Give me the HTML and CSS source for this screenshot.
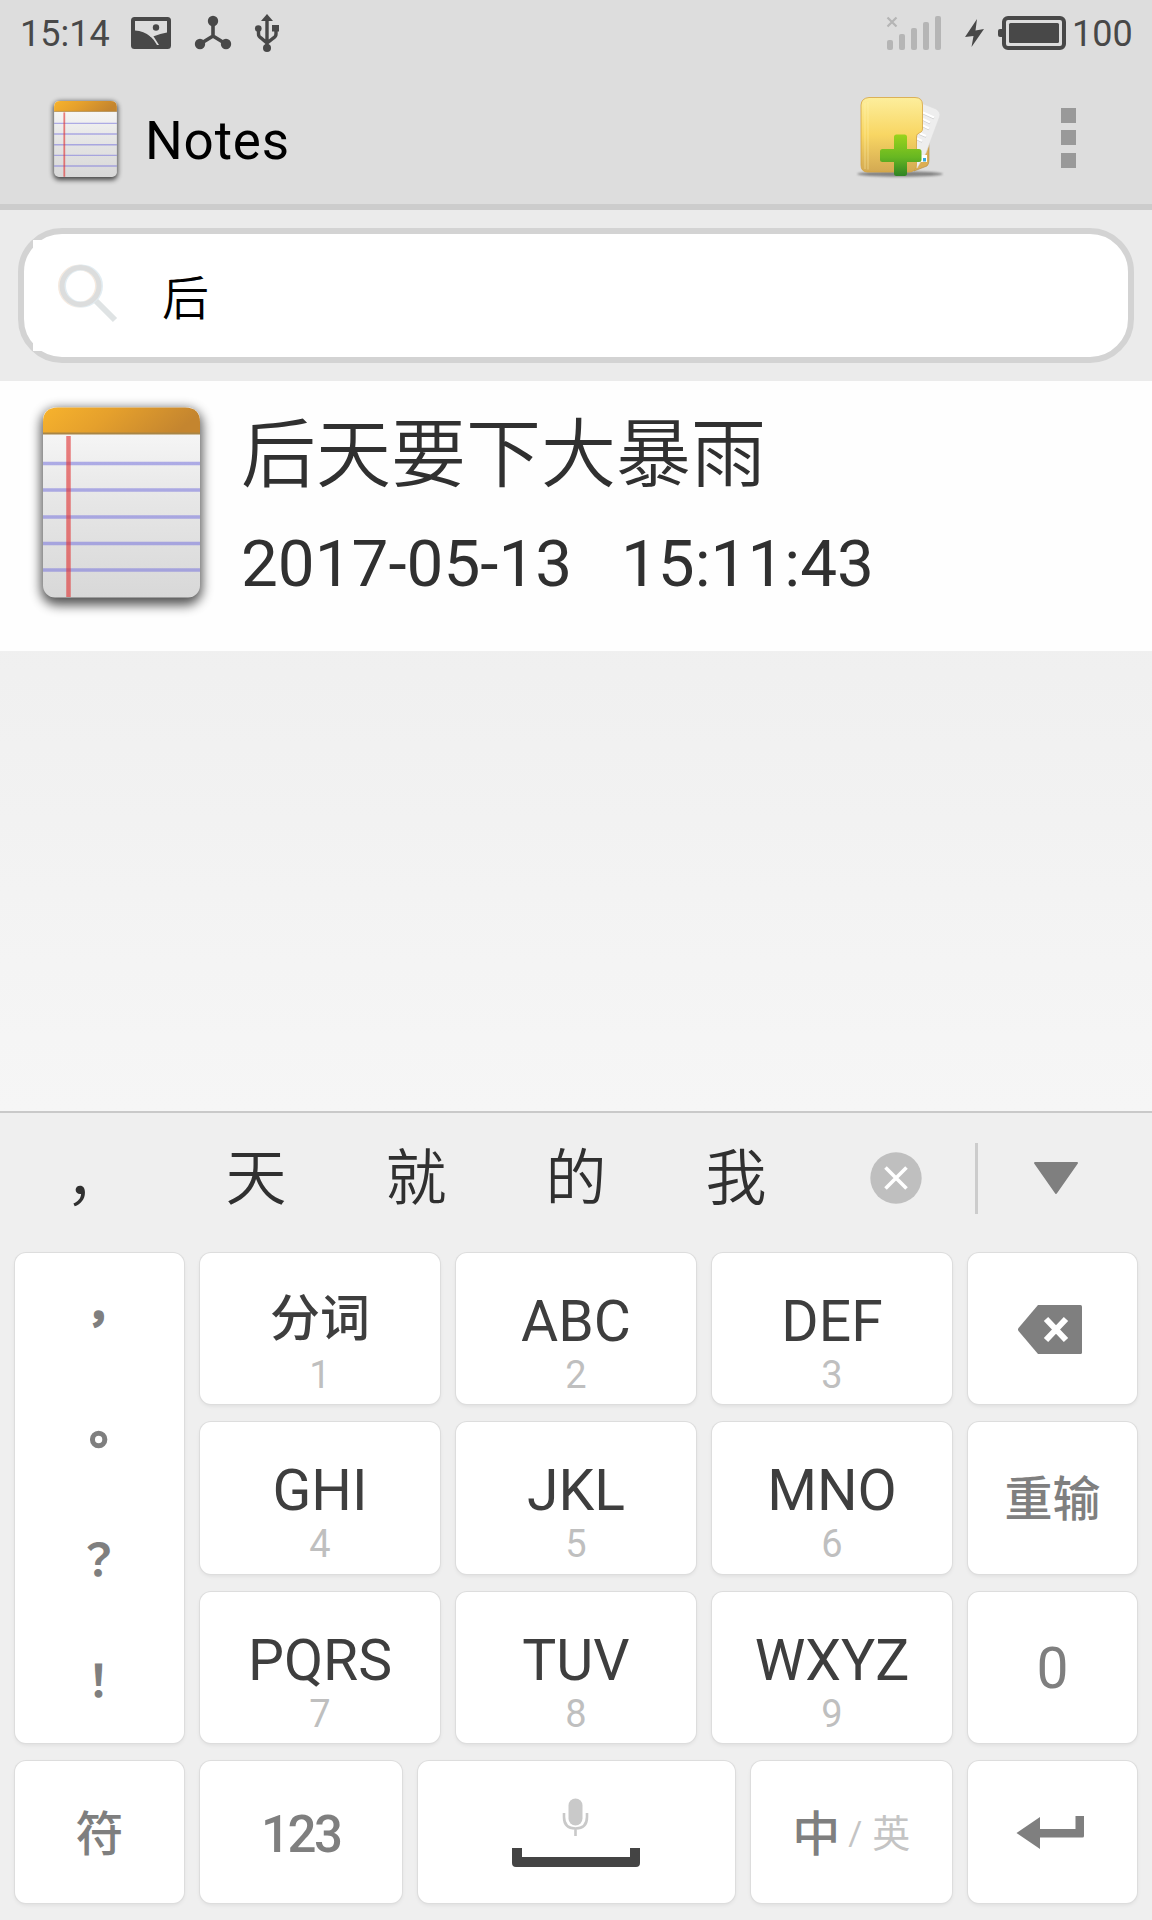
FILE: index.html
```html
<!DOCTYPE html>
<html lang="zh-CN">
<head>
<meta charset="utf-8">
<title>Notes</title>
<link rel="stylesheet" href="styles.css">
</head>
<body>
<svg class="defs" width="0" height="0" aria-hidden="true">
  <defs>
    <linearGradient id="binding" x1="0" x2="1" y1="0" y2="0.2"><stop offset="0" stop-color="#f7b32d"/><stop offset="0.45" stop-color="#e5a02c"/><stop offset="1" stop-color="#c4852f"/></linearGradient>
    <linearGradient id="paper" x1="0" x2="0" y1="0" y2="1"><stop offset="0" stop-color="#fbfbfb"/><stop offset="0.5" stop-color="#e6e6e6"/><stop offset="1" stop-color="#d8d8d8"/></linearGradient>
    <filter id="padShadow" x="-20%" y="-20%" width="140%" height="140%"><feGaussianBlur stdDeviation="6"/></filter>
    <symbol id="notepad" viewBox="0 0 197 230">
      <rect x="18" y="19" width="161" height="196" rx="16" fill="#000" opacity="0.68" filter="url(#padShadow)"/>
      <rect x="20" y="17.500" width="157" height="190" rx="12" fill="url(#paper)"/>
      <path d="M20 44V32Q20 17.500 35 17.500H162Q177 17.500 177 32V44Z" fill="url(#binding)"/>
      <path d="M20 43.500H177" stroke="#a98545" stroke-width="1.800"/>
      <path d="M20 73.500H177M20 100H177M20 127H177M20 153.500H177M20 180H177" stroke="#7772dc" stroke-opacity="0.55" stroke-width="3.500"/>
      <path d="M45.500 46V207" stroke="#e03232" stroke-opacity="0.62" stroke-width="4.500"/>
    </symbol>
  </defs>
</svg>
<div class="screen">
  <header class="status-bar">
    <span class="clock">15:14</span>
    <svg class="st-picture" viewBox="131 17 40 32" width="40" height="32"><rect x="131" y="17" width="40" height="32" rx="3.500" fill="#484848"/><path d="M135 21H167V32.500Q160 33.500 154.500 36L151 37Q143.500 30.500 135 30.500Z" fill="#ddd"/><circle cx="156" cy="27.500" r="3.200" fill="#484848"/><path d="M149.500 35.500Q154.500 40 157 45H159L153 35.500Z" fill="#ddd"/></svg>
    <svg class="st-hub" viewBox="194 15 38 35" width="38" height="35" fill="#484848"><path d="M213 21V36L200 44M213 36L226 44" fill="none" stroke="#484848" stroke-width="3.600"/><circle cx="213" cy="21" r="5.200"/><circle cx="200" cy="44" r="5.200"/><circle cx="226" cy="44" r="5.200"/></svg>
    <svg class="st-usb" viewBox="254 14 26 39" width="26" height="39" fill="#484848"><path d="M267 14L273 21H261Z"/><path d="M267 20V48M258.500 29V34Q258.500 36.500 261 38L267 43L273.500 38Q276 36.500 276 34V29" fill="none" stroke="#484848" stroke-width="3.400"/><circle cx="258.300" cy="28.500" r="3.300"/><path d="M272 25H279V31.500H272Z"/><circle cx="267" cy="48" r="4"/></svg>
    <svg class="st-signal" viewBox="886 15 56 36" width="56" height="36" fill="#b5b5b5"><rect x="887" y="40" width="6" height="10" rx="2"/><rect x="899" y="34" width="6" height="16" rx="2"/><rect x="911" y="28" width="6" height="22" rx="2"/><rect x="923" y="22" width="6" height="28" rx="2"/><rect x="935" y="16" width="6" height="34" rx="2"/><path d="M887.500 17.500L896.500 26.500M896.500 17.500L887.500 26.500" stroke="#b5b5b5" stroke-width="2.200"/></svg>
    <svg class="st-bolt" viewBox="964 18 21 30" width="21" height="30" fill="#484848"><path d="M977 19L965 37L973.500 36L971.500 47L984 29L975.500 30.500Z"/></svg>
    <svg class="st-battery" viewBox="997 15 70 36" width="70" height="36" fill="#484848"><rect x="1004" y="18" width="60" height="30" rx="4" fill="none" stroke="#484848" stroke-width="4"/><rect x="1009" y="23" width="50" height="20" rx="1.500"/><rect x="998" y="29" width="6" height="8" rx="2"/></svg>
    <span class="level">100</span>
  </header>

  <div class="action-bar">
    <svg class="app-icon" width="79" height="92"><use href="#notepad"/></svg>
    <h1 class="app-title">Notes</h1>
    <svg class="new-note" viewBox="855 94 90 86" width="90" height="86">
      <defs>
        <linearGradient id="folder" x1="0" x2="0" y1="0" y2="1"><stop offset="0" stop-color="#fdee9c"/><stop offset="0.5" stop-color="#f8d663"/><stop offset="1" stop-color="#d3a952"/></linearGradient>
        <linearGradient id="plus" x1="0" x2="0" y1="0" y2="1"><stop offset="0" stop-color="#9ad31c"/><stop offset="0.55" stop-color="#67b722"/><stop offset="1" stop-color="#2f8424"/></linearGradient>
        <filter id="soft" x="-20%" y="-100%" width="140%" height="300%"><feGaussianBlur stdDeviation="1.300"/></filter>
      </defs>
      <ellipse cx="900" cy="174" rx="43" ry="2.800" fill="#555" opacity="0.65" filter="url(#soft)"/>
      <path d="M914 171L927 166Q929 164 929 160V143L925 139L914 150Z" fill="#dcae54" stroke="#b48a3d" stroke-width="0.600"/>
      <path d="M921 103L936 109Q941 112 939.500 117L926 153L917 168L914 160Z" fill="#eee" stroke="#dcdcdc" stroke-width="0.600"/>
      <path d="M923 113.500L934 118.500M923 120L930 123.500M922 126L929 129.500M919 134L926 137M917 139.500L922 142" stroke="#ccc" stroke-width="1.600"/>
      <path d="M923 112.500L934 117.500M923 119L930 122.500M922 125L929 128.500M919 133L926 136M917 138.500L922 141" stroke="#fff" stroke-width="2"/>
      <path d="M921.500 155H927V162H921Z" fill="#fff"/><path d="M923 158H926V161.500H923Z" fill="#36a8e0"/>
      <path d="M869 97.500H915Q922.500 97.500 922.500 105V129Q922.500 131 921 132L917.500 134Q916.500 135 916.500 137V165Q916 171 910 172H867Q861 171.500 861 165V105Q861.500 98 869 97.500Z" fill="url(#folder)" stroke="#d5a33e" stroke-width="0.800"/>
      <path d="M865 103V169M868 102V169.500" stroke="#fff3b0" stroke-width="0.800" opacity="0.6"/>
      <path d="M896.500 134.500H904.500Q907 134.500 907 137V149H919Q921.500 149 921.500 151.500V159.500Q921.500 162 919 162H907V173.500Q907 176 904.500 176H896.500Q894 176 894 173.500V162H882.500Q880 162 880 159.500V151.500Q880 149 882.500 149H894V137Q894 134.500 896.500 134.500Z" fill="url(#plus)"/>
    </svg>
    <svg class="overflow" viewBox="0 0 15 60" width="15" height="60" fill="#999"><path d="M0 0H15V15H0ZM0 22H15V37H0ZM0 45H15V60H0Z"/></svg>
  </div>

  <div class="search-area">
    <div class="search-box">
      <svg class="search-icon" viewBox="33 240 100 111" width="100" height="111" fill="none"><circle cx="79.500" cy="286" r="18.500" stroke="#f6eadf" stroke-width="6"/><circle cx="81.500" cy="286" r="18.500" stroke="#e2edf3" stroke-width="6"/><circle cx="80.500" cy="286" r="18.500" stroke="#dcdddd" stroke-width="5"/><path d="M96 301L115 320" stroke="#dfe3e4" stroke-width="6"/></svg>
      <span class="query">后</span>
    </div>
  </div>

  <main class="results">
    <article class="note">
      <svg class="note-icon" width="197" height="230"><use href="#notepad"/></svg>
      <div class="note-text">
        <h2 class="note-title">后天要下大暴雨</h2>
        <p class="note-date">2017-05-13   15:11:43</p>
      </div>
    </article>
  </main>

  <section class="keyboard">
    <div class="candidates">
      <span class="cand han">，</span><span class="cand han">天</span><span class="cand han">就</span><span class="cand han">的</span><span class="cand han">我</span>
      <span class="cand"><svg viewBox="0 0 52 52" width="52" height="52"><circle cx="26" cy="26" r="25.700" fill="#bfbfbf"/><path d="M15.500 15.500L36.500 36.500M36.500 15.500L15.500 36.500" stroke="#fff" stroke-width="3.600"/></svg></span>
      <span class="cand expand"><svg viewBox="0 0 46 34" width="46" height="34"><path d="M2 2H44L23 32Z" fill="#7f7f7f" stroke="#7f7f7f" stroke-width="2" stroke-linejoin="round"/></svg></span>
    </div>
    <div class="keys">
      <div class="key punct"><span class="comma">，</span><span class="stop">。</span><span>？</span><span>！</span></div>
      <div class="key letter"><b class="fenci">分词</b><i>1</i></div>
      <div class="key letter"><b>ABC</b><i>2</i></div>
      <div class="key letter"><b>DEF</b><i>3</i></div>
      <div class="key icon-key"><svg viewBox="1018 1305 64 49" width="64" height="49"><path d="M1038 1305H1080.500Q1082 1305 1082 1306.500V1352.500Q1082 1354 1080.500 1354H1038L1018.500 1331Q1017.500 1329.500 1018.500 1328Z" fill="#7f7f7f"/><path d="M1046 1319L1066 1340M1066 1319L1046 1340" stroke="#fff" stroke-width="6"/></svg></div>
      <div class="key letter"><b>GHI</b><i>4</i></div>
      <div class="key letter"><b>JKL</b><i>5</i></div>
      <div class="key letter"><b>MNO</b><i>6</i></div>
      <div class="key side retype">重输</div>
      <div class="key letter"><b>PQRS</b><i>7</i></div>
      <div class="key letter"><b>TUV</b><i>8</i></div>
      <div class="key letter"><b>WXYZ</b><i>9</i></div>
      <div class="key side zero">0</div>
    </div>
    <div class="keys-bottom">
      <div class="key side symbols">符</div>
      <div class="key side numbers">123</div>
      <div class="key"><svg class="space" viewBox="512 1796 128 69" width="128" height="69"><rect x="568.500" y="1796.500" width="14" height="27" rx="7" fill="#c9c9c9"/><path d="M564 1811V1815Q564 1826.500 575.500 1826.500Q587 1826.500 587 1815V1811M575.500 1827V1834" fill="none" stroke="#c9c9c9" stroke-width="2.600"/><path d="M512 1846H522V1855H630V1846H640V1861Q640 1865 636 1865H516Q512 1865 512 1861Z" fill="#444"/></svg></div>
      <div class="key side lang"><span>中</span><span class="slash">/</span><span class="alt">英</span></div>
      <div class="key icon-key"><svg viewBox="1016 1817 68 34" width="68" height="34" fill="#7f7f7f"><path d="M1016.500 1834L1040 1818V1830H1075.500V1817H1084V1837Q1084 1838.500 1082.500 1838.500H1040V1850Z"/></svg></div>
    </div>
  </section>
</div>
</body>
</html>
```

FILE: styles.css
```css
* { box-sizing: border-box; margin: 0; padding: 0; }

body {
  width: 1152px;
  height: 1920px;
  overflow: hidden;
  font-family: Roboto, "Noto Sans CJK SC", sans-serif;
  background: #fff;
}

svg { display: block; flex: none; }
.defs { position: absolute; }

.screen { display: flex; flex-direction: column; height: 1920px; }

/* status bar */
.status-bar {
  display: flex;
  align-items: flex-start;
  height: 66px;
  flex: none;
  background: #ddd;
  color: #484848;
  font-size: 36px;
  line-height: 40px;
}
.clock { margin: 14px 0 0 20px; width: 90px; }
.st-picture { margin: 17px 0 0 21px; }
.st-hub { margin: 15px 0 0 23px; }
.st-usb { margin: 14px 0 0 22px; }
.st-signal { margin: 15px 0 0 auto; }
.st-bolt { margin: 18px 0 0 22px; }
.st-battery { margin: 15px 0 0 12px; }
.level { margin: 14px 0 0 5px; width: 80px; }

/* action bar */
.action-bar {
  display: flex;
  align-items: flex-start;
  height: 144px;
  flex: none;
  background: #ddd;
  border-bottom: 6px solid #ccc;
}
.app-icon { margin: 28px 0 0 46px; }
.app-title {
  margin: 45px 0 0 20px;
  font-size: 53px;
  font-weight: 400;
  line-height: 60px;
  letter-spacing: 0.8px;
  color: #000;
}
.new-note { margin: 28px 0 0 auto; }
.overflow { margin: 42px 76px 0 116px; }

/* search */
.search-area {
  height: 171px;
  flex: none;
  padding: 18px;
  background: #ebebeb;
}
.search-box {
  display: flex;
  align-items: center;
  height: 135px;
  border: 6px solid #d3d3d3;
  border-radius: 44px;
  background: #fff;
}
.search-icon { margin-left: 9px; background: #fff; }
.query { margin-left: 29px; padding-top: 6px; font-size: 47px; line-height: 60px; color: #000; font-weight: 350; }

/* results */
.results {
  height: 730px;
  flex: none;
  background: linear-gradient(#ececec, #f6f6f6);
}
.note { display: flex; height: 270px; background: #fefefe; color: #303030; }
.note-icon { margin: 9px 0 0 23px; }
.note-text { margin-left: 21px; padding-top: 29px; }
.note-title { font-size: 75px; font-weight: 350; line-height: 90px; }
.note-date { font-size: 65.600px; line-height: 80px; margin-top: 24px; white-space: pre; }

/* keyboard */
.keyboard {
  flex: 1;
  border-top: 2px solid #c9c9c9;
  background: #efefef;
}
.candidates {
  display: flex;
  height: 140px;
  padding: 0 16px 10px;
}
.cand {
  display: flex;
  align-items: center;
  justify-content: center;
  width: 160px;
}
.han {
  padding-bottom: 9px;
  font-family: "Noto Sans CJK SC", sans-serif;
  font-size: 61px;
  font-weight: 350;
  line-height: 60px;
  color: #303030;
}
.expand { position: relative; }
.expand::before {
  content: "";
  position: absolute;
  left: -1px;
  top: 30px;
  width: 3px;
  height: 71px;
  background: #ccc;
}

.keys {
  display: grid;
  grid-template-columns: 169px 240px 240px 240px 169px;
  grid-template-rows: 151px 152px 151px;
  gap: 18px 16px;
  padding: 0 15px;
}
.keys-bottom {
  display: grid;
  grid-template-columns: 169px 201.500px 317px 201.500px 169px;
  grid-template-rows: 142px;
  column-gap: 16px;
  padding: 0 15px;
  margin-top: 18px;
}
.key {
  display: flex;
  align-items: center;
  justify-content: center;
  border-radius: 11px;
  background: #fff;
  box-shadow: 0 0 0 1px #ddd, 0 2px 4px rgba(0, 0, 0, 0.08);
}
.icon-key { padding: 2px 5px 0 0; }
.punct {
  grid-row: span 3;
  flex-direction: column;
  padding: 0 2px 2px 0;
  font-family: "Noto Sans CJK TC", sans-serif;
  font-size: 44px;
  font-weight: 700;
  line-height: 121px;
  color: #7f7f7f;
}
.comma { font-size: 42px; -webkit-text-stroke: 1.500px #7f7f7f; }
.stop { font-size: 49px; -webkit-text-stroke: 1.500px #7f7f7f; }
.letter { flex-direction: column; justify-content: flex-start; }
.letter b { font-weight: 400; font-size: 57px; line-height: 60px; color: #3e3e3e; margin-top: 39px; }
.letter b.fenci { font-size: 50px; font-weight: 500; margin-top: 36px; margin-bottom: 3px; }
.letter i { font-style: normal; font-size: 38px; line-height: 40px; color: #bfbfbf; margin-top: 3px; }

.side { padding-top: 3px; color: #7f7f7f; font-weight: 500; line-height: 60px; }
.keys-bottom .side { padding-top: 6px; }
.retype, .symbols { font-size: 48px; }
.zero { font-size: 57px; font-weight: 400; }
.numbers { font-size: 51px; letter-spacing: -2.500px; }
.lang { font-size: 48px; }
.slash { font-size: 34px; font-weight: 400; color: #c4c4c4; margin: -4px 10px 0 8px; }
.alt { font-size: 38px; font-weight: 400; color: #c4c4c4; margin-top: -3px; }
```
